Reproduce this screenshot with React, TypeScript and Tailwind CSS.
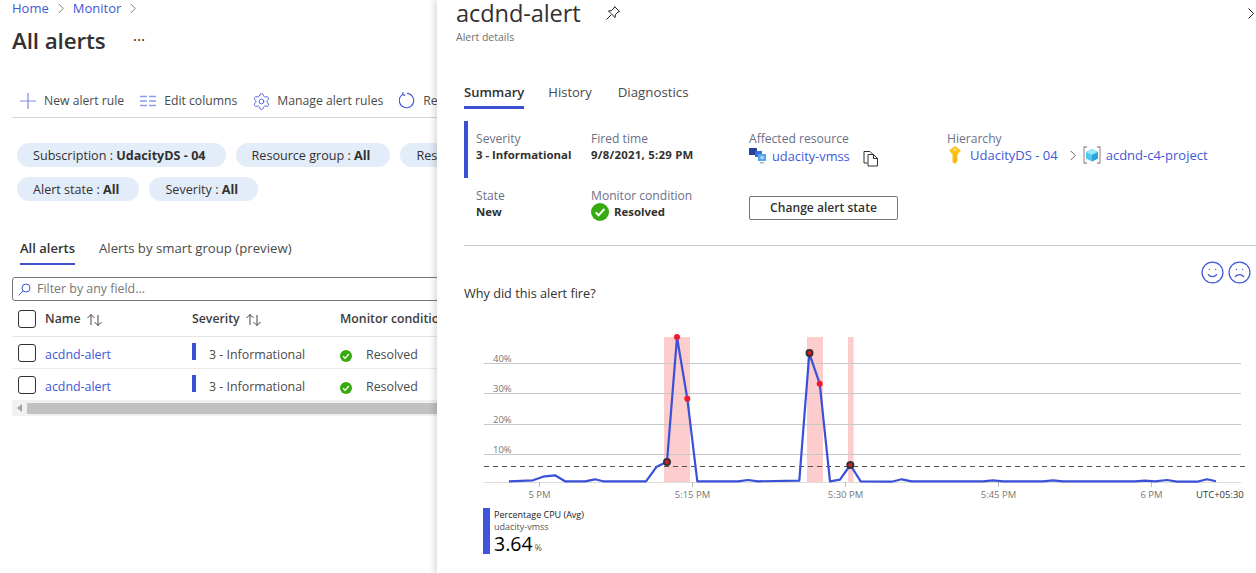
import { Frown, Settings, Smile } from "lucide-react"

const BLUE = "#3f57d8"

function Chevron({ className = "" }: { className?: string }) {
  return (
    <svg viewBox="0 0 8 12" className={className} fill="none" stroke="currentColor" strokeWidth="1">
      <path d="M1.5 1 L6.5 6 L1.5 11" />
    </svg>
  )
}

function ResolvedIcon({ size }: { size: number }) {
  return (
    <svg width={size} height={size} viewBox="0 0 18 18" className="shrink-0">
      <circle cx="9" cy="9" r="9" fill="#36ab10" />
      <path d="M4.6 9.4 L7.6 12.3 L13.4 6" fill="none" stroke="#fff" strokeWidth="2" />
    </svg>
  )
}

function SortArrows() {
  return (
    <svg width="17" height="14" viewBox="0 0 17 14" fill="none" stroke="#444" strokeWidth="1">
      <path d="M5 12 V1.5 M1.5 5 L5 1.5 L8.5 5" />
      <path d="M12 2 V12.5 M8.5 9 L12 12.5 L15.5 9" />
    </svg>
  )
}

function Pill({ label, value }: { label: string; value: string }) {
  return (
    <div className="h-6 rounded-full bg-[#e3edf9] pl-4 pr-5 pt-[2px] flex items-center whitespace-nowrap text-[12.6px] text-[#323130] shrink-0">
      {label} :&nbsp;<span className="font-bold">{value}</span>
    </div>
  )
}

function Checkbox() {
  return <div className="h-[18px] w-[18px] rounded-[3px] border border-[#323130] bg-white shrink-0" />
}

function AlertRow() {
  return (
    <div className="h-8 flex items-center border-b border-[#edebe9] text-[12.4px] w-[480px]">
      <div className="w-[33px] pl-[6px] shrink-0">
        <Checkbox />
      </div>
      <div className="w-[147px] shrink-0 mt-[6px]" style={{ color: BLUE }}>acdnd-alert</div>
      <div className="w-[148px] shrink-0 flex items-center text-[#4a4a4a]">
        <div className="w-1 h-[17px] bg-[#3a50d0] mr-[13px] -mt-[2px]" />
        <span className="mt-[6px]">3 - Informational</span>
      </div>
      <div className="flex items-center text-[#4a4a4a] gap-[14px]">
        <span className="mt-[7px]"><ResolvedIcon size={12} /></span>
        <span className="mt-[6px]">Resolved</span>
      </div>
    </div>
  )
}

function LeftPanel() {
  return (
    <div className="w-[437px] shrink-0 overflow-hidden">
      <div className="h-4 pl-3 flex items-center gap-[8px] text-[13px] leading-4" style={{ color: BLUE }}>
        Home
        <Chevron className="w-[8px] h-[11px] text-[#777]" />
        Monitor
        <Chevron className="w-[8px] h-[11px] text-[#777]" />
      </div>
      <div className="mt-[9px] h-8 pl-3 flex items-center text-[#323130]">
        <span className="text-[22.4px] font-semibold tracking-[-0.1px] leading-8">All alerts</span>
        <span className="ml-[27px] text-[16px] -mt-[3px]">···</span>
      </div>

      <div className="mt-[26px] ml-3 h-[35px] border-b border-[#d4d4d4] pl-2 pt-[2px] flex items-center gap-4 text-[12.2px] text-[#4a4a4a] whitespace-nowrap">
        <div className="flex items-center gap-2 shrink-0">
          <svg width="16" height="16" viewBox="0 0 16 16" stroke="#7d8ce6" strokeWidth="1.2"><path d="M8 0 V16 M0 8 H16" /></svg>
          New alert rule
        </div>
        <div className="flex items-center gap-2 shrink-0">
          <svg width="16" height="12" viewBox="0 0 16 12" stroke="#8d9bea" strokeWidth="1.4">
            <path d="M0 1.5 H7 M0 6 H7 M0 10.5 H7 M9 1.5 H16 M9 6 H16 M9 10.5 H16" />
          </svg>
          Edit columns
        </div>
        <div className="flex items-center gap-[6px] shrink-0 -ml-[1px]">
          <Settings size={19} strokeWidth={1.1} color={BLUE} />
          Manage alert rules
        </div>
        <div className="flex items-center gap-2 shrink-0">
          <svg width="16" height="17" viewBox="0 0 16 17" fill="none" stroke={BLUE} strokeWidth="1.1">
            <path d="M3.6 2.4 A7.2 7.2 0 1 0 8 1.3 M4.2 0 L3.4 2.6 L6.2 3.4" />
          </svg>
          Refresh
        </div>
      </div>

      <div className="mt-[25px] pl-[17px] flex flex-col gap-[10px]">
        <div className="flex gap-[10px]">
          <Pill label="Subscription" value="UdacityDS - 04" />
          <Pill label="Resource group" value="All" />
          <Pill label="Resource" value="All" />
        </div>
        <div className="flex gap-[10px]">
          <Pill label="Alert state" value="All" />
          <Pill label="Severity" value="All" />
        </div>
      </div>

      <div className="mt-[37px] pl-5 flex gap-6 text-[13.2px] text-[#4a4a4a] whitespace-nowrap">
        <div className="h-[27px] pt-[1px] border-b-2 border-[#3a50d0] font-semibold text-[13px] text-[#323130]">All alerts</div>
        <div className="pt-[1px]">Alerts by smart group (preview)</div>
      </div>

      <div className="mt-[12px] ml-3 h-6 w-[480px] border border-[#777] rounded-[3px] flex items-center pl-[5px] pt-[1px] gap-[6px] text-[12.4px] text-[#777]">
        <svg width="13" height="13" viewBox="0 0 13 13" fill="none" stroke={BLUE} strokeWidth="1">
          <circle cx="8" cy="5" r="4" />
          <path d="M5 8 L0.7 12.3" />
        </svg>
        Filter by any field...
      </div>

      <div className="ml-3 w-[480px] h-[36px] flex items-center border-b border-[#e5e5e5] text-[12.3px] font-semibold text-[#3c3c3c]">
        <div className="w-[33px] pl-[6px] shrink-0"><Checkbox /></div>
        <div className="w-[147px] shrink-0 mt-[2px] flex items-center gap-[5px]">Name <SortArrows /></div>
        <div className="w-[148px] shrink-0 mt-[2px] flex items-center gap-[5px]">Severity <SortArrows /></div>
        <div className="mt-[2px] whitespace-nowrap">Monitor condition</div>
      </div>
      <div className="ml-3">
        <AlertRow />
        <AlertRow />
      </div>
      <div className="ml-3 -mt-[1px] h-4 bg-[#f1f1f1] flex items-center">
        <div className="w-[15px] flex justify-center">
          <div className="border-y-[4px] border-r-[5px] border-y-transparent border-r-[#a3a3a3]" />
        </div>
        <div className="flex-1 h-[11px] bg-[#c1c1c1]" />
      </div>
    </div>
  )
}

const linePoints =
  "509,481.3 533,480.3 543,476.7 555,475.3 565,481.3 585,481.3 595,479.3 603,481.3 646,481.3 656.7,466.7 667,461.7 677,337.3 687.3,398.7 697.3,481.3 738,481.3 748,480 758,481.3 799.3,480.7 809.3,353.3 819.7,383.7 830,481.3 840,479.7 850.3,465 860.7,481.3 891.7,481.7 901.7,479.3 911.7,481.3 983,481.3 993,480.3 1003,481.3 1043,481.3 1053,480.3 1063,481.3 1135,481.3 1145,480.7 1155,481.3 1167,480 1177,481.7 1197,481.7 1207,479.3 1216,481.3"

const gridLines = [
  { y: 363.5, label: "40%" },
  { y: 393.5, label: "30%" },
  { y: 424.5, label: "20%" },
  { y: 454.5, label: "10%" },
]

const ticks = [
  { x: 539.5, label: "5 PM" },
  { x: 692.5, label: "5:15 PM" },
  { x: 845.5, label: "5:30 PM" },
  { x: 998.5, label: "5:45 PM" },
  { x: 1151.5, label: "6 PM" },
]

function AlertChart() {
  return (
    <svg width="819" height="175" viewBox="437 330 819 175" className="block" style={{ fontFamily: "'Open Sans', sans-serif" }}>
      <rect x="664" y="337" width="26" height="145" fill="#fdcccc" />
      <rect x="807" y="337" width="16" height="145" fill="#fdcccc" />
      <rect x="848" y="337" width="5.5" height="145" fill="#fdcccc" />
      {gridLines.map((g) => (
        <g key={g.label}>
          <line x1="484" x2="1241" y1={g.y} y2={g.y} stroke="#c8c8c8" />
          <text x="493" y={g.y - 1.5} fontSize="9.5" fill="#777">{g.label}</text>
        </g>
      ))}
      <line x1="484" x2="1246" y1="466.5" y2="466.5" stroke="#555" strokeDasharray="5 4" />
      <line x1="484" x2="1241" y1="482.5" y2="482.5" stroke="#dcdcdc" />
      {ticks.map((t) => (
        <g key={t.label}>
          <line x1={t.x} x2={t.x} y1="482" y2="487" stroke="#bbb" />
          <text x={t.x} y="498" fontSize="9.5" fill="#777" textAnchor="middle">{t.label}</text>
        </g>
      ))}
      <text x="1196" y="498" fontSize="9.5" fill="#333">UTC+05:30</text>
      <polyline points={linePoints} fill="none" stroke="#3a50d8" strokeWidth="2.2" strokeLinejoin="round" />
      {[[677, 337], [687.3, 398.7], [819.7, 383.7]].map(([x, y]) => (
        <circle key={x} cx={x} cy={y} r="3" fill="#f0192f" />
      ))}
      {[[667, 462], [809.5, 353], [850.3, 465]].map(([x, y]) => (
        <circle key={x} cx={x} cy={y} r="3" fill="#e0182c" stroke="#333" strokeWidth="2" />
      ))}
    </svg>
  )
}

function FieldLabel({ text }: { text: string }) {
  return <div className="text-[12.1px] leading-[17px] pt-[1px] text-[#6b7089]">{text}</div>
}

function Field({ label, value, className = "", valueClass = "" }: { label: string; value: string; className?: string; valueClass?: string }) {
  return (
    <div className={className}>
      <FieldLabel text={label} />
      <div className={"text-[11.4px] leading-4 font-bold text-[#323130] whitespace-nowrap " + valueClass}>{value}</div>
    </div>
  )
}

function RightPanel() {
  return (
    <div className="flex-1 min-w-0 bg-white shadow-[-3px_0_6px_rgba(0,0,0,0.14)] overflow-hidden">
      <div className="h-[26px] pl-[19px] pr-[1px] flex items-center">
        <span className="text-[23.6px] leading-[26px] font-normal text-[#323130] tracking-[-0.1px] whitespace-nowrap">acdnd-alert</span>
        <svg width="16" height="16" viewBox="0 0 16 16" fill="none" stroke="#222" strokeWidth="1" className="ml-[24px]">
          <path d="M9.5 1.5 L14.5 6.5 L13 7 L10.5 9.5 L10 12.5 L3.5 6 L6.5 5.5 L9 3 Z M6 10 L1.5 14.5" />
        </svg>
        <Chevron className="ml-auto w-[8px] h-[13px] text-[#222]" />
      </div>
      <div className="pl-[19px] mt-[3px] text-[10.5px] leading-4 text-[#6f6f6f]">Alert details</div>

      <div className="ml-[27px] mt-[38px] flex gap-6 text-[13px] text-[#4a4a4a] whitespace-nowrap">
        <div className="h-[26px] border-b-[3px] border-[#3a50d0] font-semibold text-[#323130]">Summary</div>
        <div>History</div>
        <div className="ml-[2px] text-[13.3px]">Diagnostics</div>
      </div>

      <div className="ml-[27px] mt-[12px] h-[57px] border-l-4 border-[#3a50d0] pl-2 pt-[8px] flex">
        <Field label="Severity" value="3 - Informational" className="w-[115px] shrink-0" />
        <Field label="Fired time" value="9/8/2021, 5:29 PM" className="w-[158px] shrink-0" valueClass="tracking-[0.25px]" />
        <div className="w-[198px] shrink-0">
          <FieldLabel text="Affected resource" />
          <div className="flex items-center text-[12.8px] leading-4 whitespace-nowrap" style={{ color: BLUE }}>
            <svg width="18" height="18" viewBox="0 0 18 18" className="mr-[5px] shrink-0 -my-[1px]">
              <rect x="0" y="1" width="8" height="7" fill="#2a3f9e" />
              <rect x="6" y="4" width="7" height="6" fill="#3b6fd8" />
              <rect x="9" y="7" width="8" height="7" fill="#5aa5ec" />
              <circle cx="13" cy="10.5" r="1.6" fill="#b9e3fb" />
              <path d="M11 15 H15 V16.5 H11 Z" fill="#a5b4c8" />
            </svg>
            udacity-vmss
            <svg width="16" height="17" viewBox="0 0 16 17" fill="none" stroke="#333" strokeWidth="1" className="ml-[13px] mt-[3px] -mb-[3px]">
              <path d="M4.5 13 H1 V1.5 H7 L10 4.5" />
              <path d="M5 4.5 H10.5 L14.5 8.5 V16 H5 Z M10.5 4.5 V8.5 H14.5" />
            </svg>
          </div>
        </div>
        <div className="whitespace-nowrap">
          <FieldLabel text="Hierarchy" />
          <div className="flex items-center text-[13px] leading-4" style={{ color: BLUE }}>
            <svg width="16" height="18" viewBox="0 0 16 18" className="mr-[7px] shrink-0 -my-[1px]">
              <path d="M8 0 L14 4.5 L10.5 8.5 V15 L8 18 L5.5 16 V8.5 L2 4.5 Z" fill="#fcc419" />
              <circle cx="8" cy="3.6" r="1.2" fill="#fff3bf" />
              <path d="M8 8 V17" stroke="#e8a900" strokeWidth="1" />
            </svg>
            UdacityDS - 04
            <Chevron className="w-[8px] h-[11px] text-[#555] ml-[11px] mr-[6px]" />
            <svg width="18" height="18" viewBox="0 0 18 18" className="mr-[5px] shrink-0 -my-[1px]">
              <path d="M4 1 H1 V17 H4 M14 1 H17 V17 H14" fill="none" stroke="#a19f9d" strokeWidth="1.3" />
              <path d="M9 3 L15 6 V12.5 L9 15.5 L3 12.5 V6 Z" fill="#50c8f0" />
              <path d="M9 3 L15 6 L9 9 L3 6 Z" fill="#9be8fb" />
              <path d="M9 9 L15 6 V12.5 L9 15.5 Z" fill="#2aa5dc" />
            </svg>
            acdnd-c4-project
          </div>
        </div>
      </div>

      <div className="ml-[27px] mt-[8px] h-[46px] pl-3 flex items-start">
        <Field label="State" value="New" className="w-[115px] shrink-0" />
        <div className="w-[158px] shrink-0">
          <FieldLabel text="Monitor condition" />
          <div className="flex items-center gap-[5px] text-[11.4px] leading-4 font-bold text-[#323130]">
            <span className="-my-[1px] -mt-[2px]"><ResolvedIcon size={18} /></span>
            Resolved
          </div>
        </div>
        <div className="mt-[10px] h-6 w-[149px] border border-[#777] rounded-[2px] pt-[1px] flex items-center justify-center text-[12.1px] font-semibold text-[#323130]">
          Change alert state
        </div>
      </div>

      <div className="ml-[27px] mt-[13px] border-t border-[#c8c8d4]" />

      <div className="mt-[14px] pr-[4px] flex justify-end gap-[2px]" style={{ color: BLUE }}>
        <Smile size={25} strokeWidth={1.2} />
        <Frown size={25} strokeWidth={1.2} />
      </div>
      <div className="ml-[27px] -mt-[2px] text-[12.7px] leading-5 text-[#323130]">Why did this alert fire?</div>

      <div className="mt-[27px]">
        <AlertChart />
      </div>

      <div className="ml-[46px] mt-[3px] h-[46px] flex gap-1">
        <div className="w-[7px] bg-[#3f54db] shrink-0" />
        <div className="text-[#222]">
          <div className="text-[9px] leading-3 mt-[1px]">Percentage CPU (Avg)</div>
          <div className="text-[9px] leading-3 text-[#555]">udacity-vmss</div>
          <div className="leading-[22px] whitespace-nowrap">
            <span className="text-[19.5px] font-medium text-black">3.64</span>
            <span className="text-[9px] ml-[2px] text-[#555]">%</span>
          </div>
        </div>
      </div>
    </div>
  )
}

export default function App() {
  return (
    <div className="w-[1256px] h-[573px] overflow-hidden flex bg-white font-['Open_Sans',sans-serif]">
      <LeftPanel />
      <RightPanel />
    </div>
  )
}
